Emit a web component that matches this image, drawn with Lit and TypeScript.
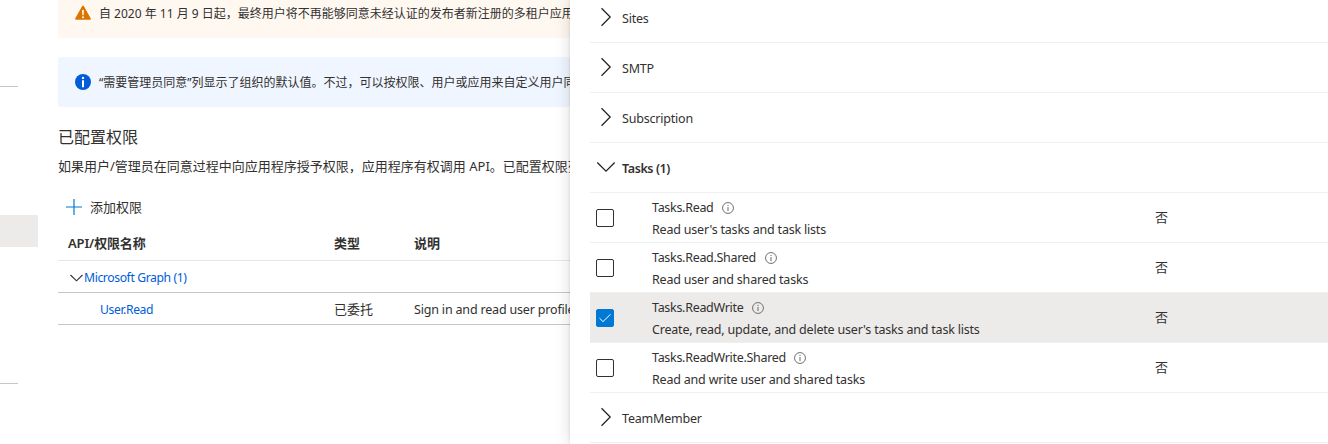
import { LitElement, html, css, svg, nothing } from "lit";
import { customElement } from "lit/decorators.js";
import { classMap } from "lit/directives/class-map.js";

interface Permission {
  name: string;
  text: string;
  checked?: boolean;
}
interface Group {
  name: string;
  open?: boolean;
  items?: Permission[];
}

const groups: Group[] = [
  { name: "Sites" },
  { name: "SMTP" },
  { name: "Subscription" },
  {
    name: "Tasks (1)",
    open: true,
    items: [
      { name: "Tasks.Read", text: "Read user's tasks and task lists" },
      { name: "Tasks.Read.Shared", text: "Read user and shared tasks" },
      { name: "Tasks.ReadWrite", text: "Create, read, update, and delete user's tasks and task lists", checked: true },
      { name: "Tasks.ReadWrite.Shared", text: "Read and write user and shared tasks" },
    ],
  },
  { name: "TeamMember" },
];

const chevronRight = html`<svg width="20" height="20" viewBox="0 0 20 20" fill="none" stroke="#222" stroke-width="1.25">${svg`<path d="M5.5 1.3 14.2 10 5.5 18.7"/>`}</svg>`;
const chevronDown = html`<svg width="20" height="20" viewBox="0 0 20 20" fill="none" stroke="#222" stroke-width="1.25">${svg`<path d="M1.3 5.5 10 14.2 18.7 5.5"/>`}</svg>`;
const infoOutline = html`<svg width="12" height="12" viewBox="0 0 12 12" fill="none" stroke="#6b6966">${svg`<circle cx="6" cy="6" r="5.45" stroke-width=".95"/><path d="M6 5v4M6 2.9v1.1" stroke-width="1"/>`}</svg>`;

@customElement("permission-panel")
export class PermissionPanel extends LitElement {
  static styles = css`
    :host { display: block; }
    .list { display: flex; flex-direction: column; margin: -7px 0 0 20px; }
    .row { box-sizing: border-box; height: 50px; border-bottom: 1px solid #efefef; display: flex; align-items: center; flex: none; }
    .group { padding: 0 0 1px 6px; gap: 6px; }
    .group svg { flex: none; }
    .label { padding-top: 4px; line-height: 20px; letter-spacing: -0.2px; }
    .open { font-weight: 600; letter-spacing: -0.4px; }
    .perm { display: grid; grid-template-columns: 62px 503px 1fr; align-items: center; }
    .perm.on { background: #edebe9; }
    .box { box-sizing: border-box; width: 18px; height: 18px; margin: 0 0 0 6px; border: 1px solid #323130; border-radius: 2px; background: #fff; display: flex; align-items: center; justify-content: center; }
    .on .box { background: #0078d4; border-color: #0078d4; }
    .title { display: flex; align-items: center; gap: 8.5px; height: 22px; line-height: 22px; letter-spacing: -0.3px; }
    .title svg { margin-bottom: 1px; }
    .text { height: 22px; line-height: 22px; letter-spacing: -0.2px; }
    .lines { padding: 3px 0 0; }
    .consent { font-size: 13px; line-height: 20px; padding-bottom: 1px; }
  `;
  render() {
    return html`<div class="list">${groups.map((g) => html`
      <div class="row group">${g.open ? chevronDown : chevronRight}<span class=${classMap({ label: true, open: !!g.open })}>${g.name}</span></div>
      ${(g.items ?? []).map((p) => html`
        <div class=${classMap({ row: true, perm: true, on: !!p.checked })}>
          <span class="box">${p.checked ? html`<svg width="14" height="14" viewBox="0 0 14 14" fill="none" stroke="#fff" stroke-width="1">${svg`<path d="M1.5 7.2 5 10.6 12.5 3.3"/>`}</svg>` : nothing}</span>
          <div class="lines">
            <div class="title"><span>${p.name}</span>${infoOutline}</div>
            <div class="text">${p.text}</div>
          </div>
          <span class="consent">否</span>
        </div>`)}`)}</div>`;
  }
}

@customElement("app-root")
export class AppRoot extends LitElement {
  static styles = css`
    :host {
      display: flex; width: 1328px; height: 444px; overflow: hidden; background: #fff; color: #323130;
      font: 12.5px "Noto Sans", "Noto Sans CJK SC", sans-serif;
    }
    .nav { width: 38px; flex: none; display: flex; flex-direction: column; }
    .rule { width: 18px; height: 1px; background: #c8c6c4; }
    .rule.first { margin-top: 86px; }
    .current { height: 32px; margin: 128px 0 136px; background: #edebe9; }
    .main { width: 512px; padding-left: 20px; flex: none; overflow: hidden; white-space: nowrap; }
    .note { box-sizing: border-box; display: flex; align-items: center; gap: 8px; padding-left: 17px; border-radius: 2px; font-size: 12px; }
    .note svg { flex: none; }
    .warn { height: 46px; margin-top: -8px; padding-bottom: 4px; background: #fff8f0; }
    .info { height: 50px; margin-top: 19px; background: #f0f6ff; }
    h2 { font-size: 16px; font-weight: 400; line-height: 24px; margin: 18px 0 0; }
    .desc { font-size: 13px; line-height: 20px; margin: 7px 0 0; }
    .add { display: flex; align-items: center; gap: 8px; margin: 21px 0 0 8px; height: 20px; font-size: 13px; }
    .add span { padding-bottom: 2px; }
    .tr { box-sizing: border-box; display: grid; grid-template-columns: 276px 80px 1fr; align-items: center; height: 32px; padding-top: 2px; border-bottom: 1px solid #c8c6c4; }
    .head { height: 36px; margin-top: 8px; padding: 0 0 1px; border-color: #e6e6e6; font-weight: 600; font-size: 13px; }
    .head .first { padding-left: 10px; letter-spacing: -0.15px; }
    .link { color: #015cda; font-size: 12.2px; letter-spacing: -0.4px; }
    .parent { display: flex; align-items: center; gap: 1px; padding-left: 12px; }
    .child { padding-left: 42px; }
    .cjk { font-size: 13px; padding-bottom: 2px; }
    .about { letter-spacing: -0.18px; }
    .panel { width: 758px; flex: none; background: #fff; box-shadow: 0 0 16px rgba(0, 0, 0, .14), 0 0 3px rgba(0, 0, 0, .12); position: relative; z-index: 1; }
  `;
  render() {
    return html`
      <div class="nav"><div class="rule first"></div><div class="current"></div><div class="rule"></div></div>
      <div class="main">
        <div class="note warn">
          <svg width="16" height="16" viewBox="0 0 16 16">${svg`<path d="M7.2 1.1a.95.95 0 0 1 1.6 0l7 12.4a.8.8 0 0 1-.7 1.2H.9a.8.8 0 0 1-.7-1.2z" fill="#db7500"/><path d="M7.1 5.1h1.8L8.6 10.3H7.4z" fill="#fff"/><circle cx="8" cy="12.3" r="1" fill="#fff"/>`}</svg>
          <span>自 2020 年 11 月 9 日起，最终用户将不再能够同意未经认证的发布者新注册的多租户应用</span>
        </div>
        <div class="note info">
          <svg width="16" height="16" viewBox="0 0 16 16">${svg`<circle cx="8" cy="8" r="8" fill="#015cda"/><path d="M7 6.3h2v7H7z" fill="#fff"/><circle cx="8" cy="3.9" r="1.2" fill="#fff"/>`}</svg>
          <span>“需要管理员同意”列显示了组织的默认值。不过，可以按权限、用户或应用来自定义用户同</span>
        </div>
        <h2>已配置权限</h2>
        <p class="desc">如果用户/管理员在同意过程中向应用程序授予权限，应用程序有权调用 API。已配置权限列</p>
        <div class="add"><svg width="16" height="16" viewBox="0 0 16 16" stroke="#0078d4" stroke-width="1.2">${svg`<path d="M0 8h16M8 0v16"/>`}</svg><span>添加权限</span></div>
        <div class="tr head"><span class="first">API/权限名称</span><span>类型</span><span>说明</span></div>
        <div class="tr"><span class="link parent"><svg width="13" height="8" viewBox="0 0 13 8" fill="none" stroke="#323130" stroke-width="1.1">${svg`<path d="M.5 1 6.5 6.8 12.5 1"/>`}</svg>Microsoft Graph (1)</span></div>
        <div class="tr"><span class="link child">User.Read</span><span class="cjk">已委托</span><span class="about">Sign in and read user profile</span></div>
      </div>
      <permission-panel class="panel"></permission-panel>`;
  }
}
